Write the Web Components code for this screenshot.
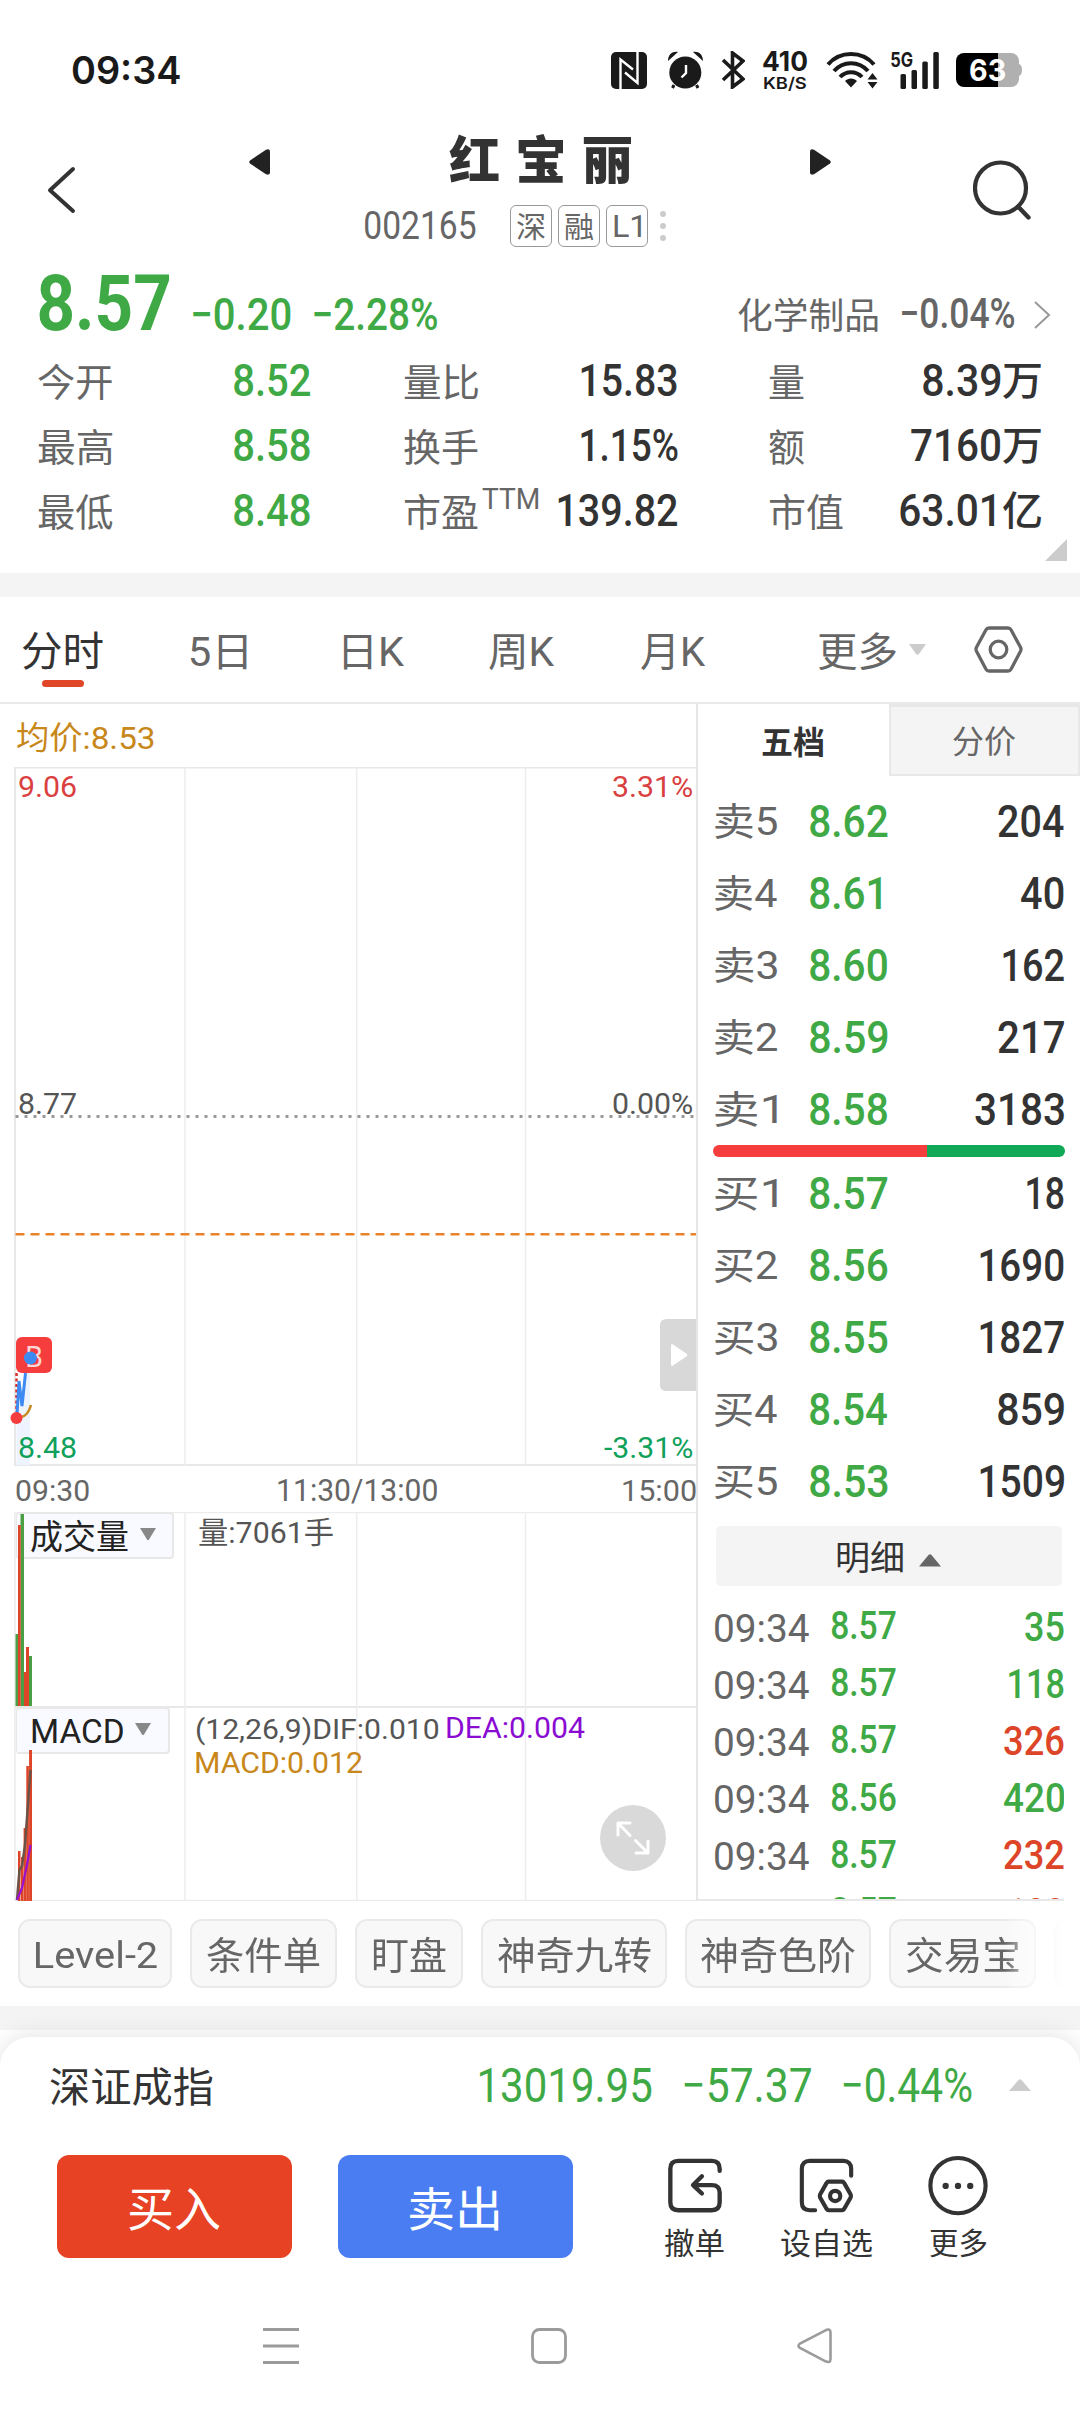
<!DOCTYPE html>
<html lang="zh-CN">
<head>
<meta charset="utf-8">
<title>红宝丽 002165</title>
<style>
  html, body { margin: 0; background: #fff; }
  body { width: 1080px; height: 2412px; overflow: hidden; font-family: Roboto, "Noto Sans CJK SC", sans-serif; color: #333; }
</style>
</head>
<body>
<stock-app></stock-app>
<script>
const ctx = document.createElement('canvas').getContext('2d');
const CJK = /[\u4e00-\u9fff]/;

/* Text set to an exact ink width (w) and, for figures, an exact ink height (h). */
class InkText extends HTMLElement {
  constructor() {
    super();
    this.attachShadow({ mode: 'open' }).innerHTML = `<style>
      :host{display:block;flex:none;overflow:visible}
      span{display:inline-block;white-space:nowrap;line-height:1;transform-origin:0 0}
      i{display:inline-block;width:0;height:0}
    </style><span><slot></slot><i></i></span>`;
  }
  connectedCallback() {
    const text = this.textContent, w = +this.getAttribute('w'), h = +this.getAttribute('h');
    const measure = () => {
      const cs = getComputedStyle(this);
      ctx.font = `${cs.fontWeight} ${cs.fontSize} ${cs.fontFamily}`;
      ctx.letterSpacing = cs.letterSpacing === 'normal' ? '0px' : cs.letterSpacing;
      return ctx.measureText(text);
    };
    if (h) {
      this.style.fontSize = '100px';
      const m0 = measure();
      this.style.fontSize = (100 * h / (m0.actualBoundingBoxAscent + m0.actualBoundingBoxDescent)) + 'px';
    } else this.style.fontSize = this.getAttribute('size') + 'px';
    const m = measure(), fs = parseFloat(getComputedStyle(this).fontSize);
    const span = this.shadowRoot.querySelector('span'), mark = this.shadowRoot.querySelector('i');
    const base = mark.getBoundingClientRect().bottom - span.getBoundingClientRect().top;
    const ink = m.actualBoundingBoxRight + m.actualBoundingBoxLeft;
    const s = w / ink;
    const up = CJK.test(text) ? fs * .88 : m.actualBoundingBoxAscent;
    const box = CJK.test(text) ? fs : m.actualBoundingBoxAscent + m.actualBoundingBoxDescent;
    this.style.width = w + 'px';
    this.style.height = box + 'px';
    this.style.lineHeight = 1;
    span.style.display = 'block';
    span.style.width = 'max-content';
    span.style.transform = `translate(${m.actualBoundingBoxLeft * s}px,${up - base}px) scaleX(${s})`;
  }
}
customElements.define('ink-text', InkText);

const num = (s, w, h, style = '') => `<ink-text w="${w}" h="${h}" style="font-weight:500;${style}">${s}</ink-text>`;
const txt = (s, w, size, style = '') => `<ink-text w="${w}" size="${size}" style="${style}">${s}</ink-text>`;
/* Lays items along a flex row; each entry is [start, width, html]. */
const line = (items, from = 0) => {
  let at = from;
  return items.map(([x, w, html]) => { const g = x - at; at = x + w; return `<div style="flex:none;width:${w}px;margin-left:${g}px">${html}</div>`; }).join('');
};
const define = (name, css, html) => customElements.define(name, class extends HTMLElement {
  constructor() { super(); this.attachShadow({ mode: 'open' }); }
  connectedCallback() {
    this.shadowRoot.innerHTML = `<style>:host{display:block}*{box-sizing:border-box}svg{display:block}.row{display:flex;align-items:center}${css}</style>${typeof html === 'function' ? html(this) : html}`;
  }
});

define('status-bar', `:host{height:120px;padding-top:20px;color:#1a1a1a}.row{height:100px}
  .net{display:flex;flex-direction:column;gap:5px;padding-top:1px}
  .bat{display:grid}.bat>*{grid-area:1/1}.bat ink-text{align-self:center;margin-left:14px}
  .sig{display:grid}.sig>*{grid-area:1/1}`,
  `<div class="row">` + line([
    [71.500, 108, num('09:34', 108, 29, 'font-family:Inter;font-weight:600;margin-top:-1px')],
    [611, 36, `<svg width="36" height="37" viewBox="0 0 36 37"><rect width="36" height="37" rx="5" fill="#1a1a1a"/><path d="M9.500 37V7.500L22 17.500M26.500 0V31L14 20.500" fill="none" stroke="#fff" stroke-width="2.400"/></svg>`],
    [667, 37, `<svg width="37" height="38" viewBox="0 0 37 38"><circle cx="18.300" cy="21.500" r="16" fill="#1a1a1a"/><path d="M7 34l-1.500 3M29.500 34l1.500 3" stroke="#1a1a1a" stroke-width="3"/><path d="M1 10C1 3 6 0 11 1L1 10zM36 10C36 3 31 0 26 1L36 10z" fill="#1a1a1a"/><path d="M19 14v8l-4.500 4.500" fill="none" stroke="#fff" stroke-width="2.400"/></svg>`],
    [721, 24, `<svg width="24" height="38" viewBox="0 0 24 38"><path d="M2 9l20 19-10.500 8V2L22 10 2 29" fill="none" stroke="#1a1a1a" stroke-width="3.600"/></svg>`],
    [763, 44, `<div class="net">${num('410', 44, 20, 'font-family:Inter;font-weight:700')}${num('KB/S', 42, 14.5, 'font-family:Inter;font-weight:600;margin-left:1px')}</div>`],
    [826, 51, `<svg width="52" height="38" viewBox="0 0 52 38"><g fill="none" stroke="#1a1a1a" stroke-width="4"><path d="M2 13.500C14-.500 36-.500 48 13.500"/><path d="M8 20C17 9.500 33 9.500 42 20"/><path d="M14 26C20 19.500 30 19.500 36 26"/></g><path d="M19 30c3-3.500 9-3.500 12 0l-6 6.500z" fill="#1a1a1a"/><path d="M46.500 22l5 6.500h-10zM46.500 37.500l5-6.500h-10z" fill="#1a1a1a"/></svg>`],
    [891, 49, `<div class="sig"><svg width="49" height="37" viewBox="0 0 49 37" fill="#1a1a1a"><rect x="9.500" y="22" width="5.500" height="15" rx="1.500"/><rect x="20.500" y="18" width="5.500" height="19" rx="1.500"/><rect x="31.300" y="9.500" width="5.500" height="27.500" rx="1.500"/><rect x="42.300" y="0" width="5.500" height="37" rx="1.500"/></svg>${num('5G', 22, 15, 'font-family:Inter;font-weight:700')}</div>`],
    [956, 66, `<div class="bat"><svg width="66" height="34" viewBox="0 0 66 34"><path d="M42 0h13a8 8 0 0 1 8 8v3q3 1 3 6t-3 6v3a8 8 0 0 1-8 8H42z" fill="#b0b0b0"/><path d="M42 0H8a8 8 0 0 0-8 8v18a8 8 0 0 0 8 8h34z" fill="#000"/></svg>${num('63', 35, 22.5, 'font-family:Inter;font-weight:700;color:#fff')}</div>`]
  ]) + `</div>`);

define('stock-tag', `:host{width:42px;height:42px;border:1.500px solid #999;border-radius:6px;display:flex;align-items:center;justify-content:center;color:#666}`, `<slot></slot>`);

define('title-bar', `:host{height:140px}.top{height:140px}.mid{width:600px;height:140px}.name{height:77px}.code{height:58px;color:#666}`,
  `<div class="row top">` + line([
    [46, 30, `<svg width="30" height="48" viewBox="0 0 30 48"><path d="M27 3L4 24.200 27 45" fill="none" stroke="#333" stroke-width="4" stroke-linecap="round" stroke-linejoin="round"/></svg>`],
    [248, 600, `<div class="mid"><div class="row name">${line([
      [249, 21, `<svg width="21" height="26" viewBox="0 0 21 26" style="margin-top:7px"><path d="M1 11.500L17 .800q4-1.500 4 2v20.400q0 3.500-4 2L1 14.500q-1.500-1.500 0-3z" fill="#222"/></svg>`],
      [449, 182, txt('红宝丽', 182, 51, 'font-weight:900;letter-spacing:15px;margin-top:1px')],
      [810, 22, `<svg width="21" height="26" viewBox="0 0 21 26" style="margin-top:7px"><path d="M20 11.500L4 .800Q0-.700 0 2.800v20.400q0 3.500 4 2L20 14.500q1.500-1.500 0-3z" fill="#222"/></svg>`]], 248)}</div>
      <div class="row code">${line([
      [365, 111, num('002165', 111, 28.5, 'font-weight:400;margin-top:-2px')],
      [510, 42, `<stock-tag>${txt('深', 28, 29)}</stock-tag>`],
      [558, 42, `<stock-tag>${txt('融', 28, 29)}</stock-tag>`],
      [606, 42, `<stock-tag>${num('L1', 27, 22, 'font-weight:400')}</stock-tag>`],
      [660, 6, `<svg width="6" height="32" fill="#ccc"><circle cx="3" cy="4" r="3"/><circle cx="3" cy="16" r="3"/><circle cx="3" cy="28" r="3"/></svg>`]], 248)}</div></div>`],
    [973, 60, `<svg width="60" height="60" viewBox="0 0 60 60"><circle cx="27.500" cy="28" r="25.500" fill="none" stroke="#333" stroke-width="4.200"/><path d="M45 46.500L55.500 57.500" stroke="#333" stroke-width="4.400" stroke-linecap="round"/></svg>`]
  ]) + `</div>`);

const G = 'color:#3fa946;', D = 'color:#333;', M = 'color:#666;';
const stat = (l1, lw1, v1, l2, lw2, x2, v2, w2, l3, lw3, v3, x3, w3, unit, sup = '') =>
  `<div class="row stat">` + line([
    [37.500, 74.500, txt(l1, 74.500, 38, M + 'margin-top:3px')],
    [234, 76, num(v1, 76, 33.5, G)],
    [403.500, lw2, txt(l2, lw2, 38, M + 'margin-top:3px')],
    ...(sup ? [[482, 57, num(sup, 57, 21, M + 'font-weight:400;margin-top:-22px')]] : []),
    [x2, w2, num(v2, w2, 33.5, D)],
    [769.500, lw3, txt(l3, lw3, 38, M + 'margin-top:3px')],
    [x3, w3, num(v3, w3, 33.5, D)],
    [1003.5, 38, txt(unit, 38, 40, D + 'font-weight:500')]]) + `</div>`;
define('quote-panel', `:host{height:313px;overflow:hidden}.price{height:73px;align-items:flex-end}.stats{padding-top:14.500px}.stat{height:65px}.corner{display:flex;justify-content:flex-end;padding-right:13px;margin-top:-4px}`,
  `<div class="row price">` + line([
    [39, 130, num('8.57', 130, 57, G + 'font-weight:700;margin-bottom:2px')],
    [193, 98, num('−0.20', 98, 33, G + 'margin-bottom:3.500px')],
    [314, 123, num('−2.28%', 123, 33, G + 'margin-bottom:3.500px')],
    [738, 140, txt('化学制品', 140, 36, M)],
    [902, 112, num('−0.04%', 112, 31, M + 'margin-bottom:5.500px')],
    [1033, 18, `<svg width="18" height="30" viewBox="0 0 18 30" style="margin-bottom:3px"><path d="M2 2l14 13L2 28" fill="none" stroke="#999" stroke-width="2"/></svg>`]
  ]) + `</div><div class="stats">`
  + stat('今开', 74, '8.52', '量比', 74, 580.6, '15.83', 96, '量', 35, '8.39', 923, 78, '万')
  + stat('最高', 74, '8.58', '换手', 74, 580.6, '1.15%', 97, '额', 35, '7160', 911, 89.5, '万')
  + stat('最低', 74, '8.48', '市盈', 74, 557.6, '139.82', 119, '市值', 74, '63.01', 900.5, 94, '亿', 'TTM')
  + `</div><div class="corner"><svg width="22" height="22"><path d="M22 0v22H0z" fill="#ccc"/></svg></div>`);

define('period-tabs', `:host{height:107px;border-bottom:2px solid #e9e9e9;color:#666;box-sizing:border-box}.row{height:105px}.on{position:relative;color:#333}.on::after{content:"";position:absolute;left:20px;top:50px;width:42px;height:6.500px;border-radius:4px;background:#e04628}ink-text{margin-top:2px}`,
  `<div class="row">` + line([
    [22, 81, `<div class="on">${txt('分时', 81, 41)}</div>`],
    [191, 56, txt('5日', 56, 40)], [344, 61, txt('日K', 61, 40)], [489, 66, txt('周K', 66, 40)], [640.500, 65, txt('月K', 65, 40)],
    [818, 78, txt('更多', 78, 40)],
    [909, 17, `<svg width="17" height="11"><path d="M0 0h17L10 10q-1.500 1.500-3 0z" fill="#ccc"/></svg>`],
    [974, 49, `<svg width="49" height="48" viewBox="0 0 49 48"><path d="M15 2h19q2 0 3 1.800l9.500 17.500q1 2 0 4L37 43.200q-1 1.800-3 1.800H15q-2 0-3-1.800L2.500 25.300q-1-2 0-4L12 3.800Q13 2 15 2z" fill="none" stroke="#666" stroke-width="3.300"/><circle cx="24.500" cy="23.500" r="8.300" fill="none" stroke="#666" stroke-width="3.300"/></svg>`]
  ]) + `</div>`);

const grid = h => `<path d="M171 0V${h}M342.700 0V${h}M511.500 0V${h}" stroke="#ededed" stroke-width="1.500"/>`;
define('indicator-button', `:host{display:flex;align-items:center;gap:12px;height:47px;border:2px solid #e8e8e8;border-left-width:1px;border-radius:4px;background:#f9faff;padding-left:14px;color:#222}svg{fill:#888}`,
  `<slot></slot><svg width="16" height="13" style="margin-top:-2px"><path d="M0 0h16l-7 11.500q-1 1-2 0z"/></svg>`);

define('time-chart', `:host{width:696px;flex:none}.avg{height:63px;padding:2px 0 0 16.500px;color:#c8871a}
  .panel{display:grid;margin-left:14px;width:682px}.panel>*{grid-area:1/1}
  .plot{height:699px}.axis{height:46px;display:flex;align-items:center;justify-content:space-between;color:#666;padding:2px 0 0 16px;border:0}
  .labels{display:grid;grid-template-columns:1fr auto;align-content:space-between;height:699px;padding:9px 4px 8px 5px;z-index:1}
  .labels>:nth-child(even){justify-self:end}
  .vol{height:194px}.macd{height:195px}.info{padding-left:182px;display:flex;flex-direction:column;z-index:1}
  .toggle{align-self:start;justify-self:end;margin-top:552px;z-index:2}
  .expand{align-self:start;justify-self:end;margin:99px 30px 0 0;z-index:2}
  indicator-button{justify-self:start;margin:0 0 0 2px;align-self:start}.marks{z-index:2}.b{justify-self:start;align-self:start;margin:569.500px 0 0 2px;width:36px;height:36px;border-radius:6px;background:#f53d3d;display:flex;justify-content:center;align-items:center;color:#ffd5d5}`,
  `<div class="row avg">${txt('均价:8.53', 136.5, 32)}</div>
  <div class="panel plot">
    <svg width="682" height="699"><path d="M0 .500H682M0 698H682M1 0V699" stroke="#e8e8e8" stroke-width="2" fill="none"/>${grid(699)}
      <path d="M1.500 349.500H682" stroke="#999" stroke-width="3" stroke-dasharray="3 6"/><path d="M1.500 467.300H682" stroke="#e8832b" stroke-width="2.600" stroke-dasharray="9 6"/>
      <path d="M2.500 650L5 614 8 640 11.500 607 16 591V698H2.500z" fill="#edf4ff"/></svg>
    <div class="labels">${num('9.06', 57, 22.5, 'font-weight:400;color:#d9403f')}${num('3.31%', 79, 22.5, 'font-weight:400;color:#d9403f')}
      ${num('8.77', 57, 22.5, 'font-weight:400;color:#555;margin-top:-24px')}${num('0.00%', 79, 22.5, 'font-weight:400;color:#555;margin-top:-24px')}
      ${num('8.48', 57, 22.5, 'font-weight:400;color:#0fa05a')}${num('-3.31%', 88, 22.5, 'font-weight:400;color:#0fa05a')}</div>
    <div class="b">${num('B', 15, 21.5, 'font-weight:400;margin-top:3px')}</div>
    <svg class="marks" width="60" height="699" style="overflow:visible"><path d="M2.500 606V645" stroke="#d9302b" stroke-width="2.500" stroke-dasharray="3 2.500"/><path d="M3 648L5 614 8 639 11.500 606 " fill="none" stroke="#3d8bf2" stroke-width="3"/><path d="M7 650q7-1 10-12" fill="none" stroke="#c8871a" stroke-width="2.500"/><circle cx="16.400" cy="591" r="6.500" fill="#3d8bf2"/><circle cx="2.500" cy="651" r="6" fill="#f53d3d"/></svg>
    <svg class="toggle" width="36" height="72"><path d="M36 0H7Q0 0 0 6v60q0 6 7 6h29z" fill="#d8d8d8"/><path d="M11 27q0-3 2-1.500l14 9.500q1 1 0 2L13 46.500q-2 1.500-2-1.500z" fill="#fff"/></svg>
  </div>
  <div class="axis">${num('09:30', 73, 22.5, 'font-weight:400')}${num('11:30/13:00', 159, 24.5, 'font-weight:400;margin:2px 0 0 2px')}${num('15:00', 73, 22.5, 'font-weight:400')}</div>
  <div class="panel vol">
    <svg width="682" height="194"><path d="M0 .500H682M1 0V194" stroke="#ececec" stroke-width="1.500" fill="none"/>${grid(194)}</svg>
    <indicator-button style="width:158px">${txt('成交量', 97, 34)}</indicator-button>
    <svg class="marks" width="30" height="194"><g fill="#4a9f45"><path d="M1.500 122h3v72h-3zM6.500 2h3.500v192H6.500zM15 144h3v50h-3z"/></g><g fill="#de4528"><path d="M4 13h2.700v181H4zM10 160h2.500v34H10zM12 135h3v59h-3z"/></g></svg>
    <div class="info">${txt('量:7061手', 134, 30, 'color:#555;margin:5px 0 0 3px')}</div>
  </div>
  <div class="panel macd">
    <svg width="682" height="195"><path d="M0 1H682" stroke="#e8e8e8" stroke-width="2"/><path d="M0 194.500H682M1 0V195" stroke="#ececec" stroke-width="1.500" fill="none"/>${grid(195)}</svg>
    <indicator-button style="width:154px;margin-top:1px">${num('MACD', 91, 24, 'font-weight:400;margin-left:1px')}</indicator-button>
    <svg class="marks" width="30" height="195"><g fill="#de4528"><path d="M4 145h2.500v50H4zM7 151h2.300v44H7zM9.600 122h2.500v73H9.600zM12.300 60h2.600v135h-2.600zM15.100 44h2.900v151h-2.900z"/></g><path d="M3 194L5.500 164 8 160 11 139 16.500 64" fill="none" stroke="#6b5348" stroke-width="2.500"/><path d="M3 194L8 182 13 159 16.500 139" fill="none" stroke="#9a12d0" stroke-width="2.300"/></svg>
    <div class="info"><div style="display:flex;gap:9px;align-items:flex-start;margin-top:10px;height:29px">${num('(12,26,9)DIF:0.010', 242, 29, 'font-weight:400;color:#555')}${num('DEA:0.004', 138, 22.5, 'font-weight:400;color:#8a0bd2;margin-top:1px')}</div>${num('MACD:0.012', 166, 22.5, 'font-weight:400;color:#c8871a;margin-top:7px')}</div>
    <svg class="expand" width="66" height="66" viewBox="0 0 66 66"><circle cx="33" cy="33" r="33" fill="#d9d9d9"/><path d="M18 30V18H30M18.500 18.500L30 30.500M48 36V48H36M47.500 47.500L35.500 35.500" fill="none" stroke="#fff" stroke-width="3" stroke-linecap="round" stroke-linejoin="round"/></svg>
  </div>`);

define('level-row', `:host{height:72px}.row{height:72px}`, e => {
  const [n, p, q, w, pw] = e.getAttribute('data').split(',');
  return `<div class="row">${line([[16.500, 62, txt(n, 62, 38, M)], [112, +pw || 77.500, num(p, +pw || 77.500, 33, G)], [365.500 - w, +w, num(q, w, 33, D)]])}</div>`;
});
define('tick-row', `:host{height:57.200px}.row{height:57.200px}`, e => {
  const [p, q, w, c] = e.getAttribute('data').split(',');
  return `<div class="row">${line([[17, 94, num('09:34', 94, 28.5, M + 'font-weight:400;margin-top:1px')], [133, 65, num(p, 65, 28.5, G + 'margin-top:-4px')], [365.500 - w, +w, num(q, w, 30, 'margin-top:-2px;color:' + (c === 'r' ? '#dd4528' : '#3fa946'))]])}</div>`;
});
define('order-book', `:host{width:384px;height:1197px;flex:none;border-left:2px solid #e6e6e6;display:flex;flex-direction:column;box-sizing:border-box}
  .tabs{display:flex;height:72px;flex:none}.tabs div{display:flex;align-items:center;justify-content:center}.a{width:191px}.z{width:191px;border:2px solid #e8e8e8;border-top-width:3px;background:#f4f4f4;color:#666}
  .asks{padding-top:9px}.ratio{display:flex;flex:none;height:12px;margin:0 15px;border-radius:6px;overflow:hidden}.ratio i:first-child{flex:none;width:214px;background:#f53d3d}.ratio i{flex:1;background:#0fa958}
  .detail{height:60px;flex:none;margin:9px 18px 12.500px;background:#f4f4f4;border-radius:5px;display:flex;align-items:center;justify-content:center;gap:16px;color:#333}
  .ticks{flex:1;min-height:0;overflow:hidden;margin-right:16px;border-bottom:2.500px solid #e8e8e8}`,
  `<div class="tabs"><div class="a">${txt('五档', 62, 32, 'font-weight:700;margin:3px 2px 0 0')}</div><div class="z">${txt('分价', 63, 32)}</div></div>
  <div class="asks">${['卖5,8.62,204,66', '卖4,8.61,40,43,71', '卖3,8.60,162,61', '卖2,8.59,217,66', '卖1,8.58,3183,89'].map(d => `<level-row data="${d}"></level-row>`).join('')}</div>
  <div class="ratio"><i></i><i></i></div>
  <div>${['买1,8.57,18,37', '买2,8.56,1690,84', '买3,8.55,1827,84', '买4,8.54,859,66', '买5,8.53,1509,84'].map(d => `<level-row data="${d}"></level-row>`).join('')}</div>
  <div class="detail">${txt('明细', 66, 34, 'margin-top:2px')}<svg width="22" height="13" style="margin-top:8px"><path d="M0 12.500L9.500 1q1.500-1.500 3 0L22 12.500z" fill="#666"/></svg></div>
  <div class="ticks">${['8.57,35,39', '8.57,118,55', '8.57,326,60,r', '8.56,420,60', '8.57,232,60,r', '8.57,188,55,r'].map(d => `<tick-row data="${d}"></tick-row>`).join('')}</div>`);

define('tool-chip', `:host{height:69px;flex:none;border:2px solid #eaeaea;border-radius:12px;background:#f8f8f8;display:flex;align-items:center;justify-content:center;color:#666;box-sizing:border-box}`, `<slot></slot>`);
define('tool-strip', `:host{height:105px}.row{height:105px;gap:18px;padding-left:18px;width:1068px;overflow:hidden;-webkit-mask:linear-gradient(90deg,#000 1004px,rgba(0,0,0,.600) 1020px,transparent 1068px)}`,
  `<div class="row"><tool-chip style="width:154px">${num('Level-2', 121, 29, 'font-weight:400;margin-left:3px')}</tool-chip>` +
  [['条件单', 147, 113], ['盯盘', 108, 73], ['神奇九转', 186, 153], ['神奇色阶', 186, 154], ['交易宝', 147, 113]].map(([s, w, t]) => `<tool-chip style="width:${w}px">${txt(s, t, 38, 'margin-top:2px')}</tool-chip>`).join('') +
  `<tool-chip style="width:60px"></tool-chip></div>`);

define('trade-sheet', `:host{height:243px;background:#fff;border-radius:30px 30px 0 0;box-shadow:0 -2px 22px rgba(0,0,0,.110);margin-top:31px;position:relative}.idx{height:96px}
  .act{display:flex;margin-top:22px;height:103px}.btn{height:103px;border-radius:12px;color:#fff;display:flex;align-items:center;justify-content:center}
  .ic{height:103px;display:flex;flex-direction:column;align-items:center;color:#333}.ic svg{height:73px;flex:none}`,
  `<div class="row idx">` + line([
    [50, 163, txt('深证成指', 163, 41, D + 'margin-top:2px')],
    [480, 172, num('13019.95', 172, 35.500, G + 'font-weight:400;margin-top:-1px')],
    [684, 127, num('−57.37', 127, 35.500, G + 'font-weight:400;margin-top:-1px')],
    [843, 129, num('−0.44%', 129, 35.500, G + 'font-weight:400;margin-top:-1px')],
    [1009, 22, `<svg width="22" height="12"><path d="M0 12L9.500 1q1.500-1.500 3 0L22 12z" fill="#ccc"/></svg>`]]) + `</div>
  <div class="act">` + line([
    [57, 235, `<div class="btn" style="background:#e84225">${txt('买入', 91, 47, 'margin-top:3px')}</div>`],
    [338, 235, `<div class="btn" style="background:#4a7df2">${txt('卖出', 89, 47, 'margin:3px 3px 0 0')}</div>`],
    [664.500, 60, `<div class="ic"><svg width="60" viewBox="0 0 60 74" fill="none" stroke="#333" stroke-width="4.400" stroke-linecap="round" stroke-linejoin="round"><path d="M55 16V14Q55 6 47 6H13Q5 6 5 14V48Q5 56 13 56H47Q55 56 55 48V38Q55 30.500 47 30.500H29M37 21.500L28 30.500 37 39"/></svg>${txt('撤单', 59, 30, '')}</div>`],
    [780.500, 91, `<div class="ic"><svg width="60" viewBox="0 0 60 74" fill="none" stroke="#333" stroke-width="4.200" stroke-linecap="round" stroke-linejoin="round"><path d="M57 21V14Q57 6 49 6H15Q7 6 7 14V48Q7 56 15 56H20.500" transform="translate(-1.500)"/><path d="M34 27H48Q49 27 50 28.500L56.500 40Q57 41.500 56.500 43L50 54.500Q49 56 48 56H34Q33 56 32 54.500L25.500 43Q25 41.500 25.500 40L32 28.500Q33 27 34 27z" transform="translate(-1.500)"/><circle cx="39.300" cy="41.500" r="5.200"/></svg>${txt('设自选', 91, 30, '')}</div>`],
    [928, 60, `<div class="ic"><svg width="60" viewBox="0 0 60 74"><circle cx="30" cy="31" r="28" fill="none" stroke="#333" stroke-width="4.200"/><g fill="#333"><circle cx="17.500" cy="31.300" r="3.200"/><circle cx="30" cy="31.300" r="3.200"/><circle cx="42.400" cy="31.300" r="3.200"/></g></svg>${txt('更多', 57, 30, '')}</div>`]
  ]) + `</div>`);

define('nav-bar', `:host{height:132px;background:#fff;position:relative}.row{height:132px}`,
  `<div class="row">` + line([
    [263, 36, `<svg width="36" height="36"><path d="M0 1.500H36M0 18H36M0 34.500H36" stroke="#9b9b9b" stroke-width="2.800"/></svg>`],
    [531, 36, `<svg width="36" height="36"><rect x="1.500" y="1.500" width="33" height="33" rx="7" fill="none" stroke="#9b9b9b" stroke-width="2.800"/></svg>`],
    [797, 36, `<svg width="36" height="36"><path d="M28.500 2.300Q33.500 0 33.500 4.500V31Q33.500 35.500 28.500 33.300L3 20Q0 18 3 15.500z" fill="none" stroke="#9b9b9b" stroke-width="2.600"/></svg>`]
  ]) + `</div>`);

define('stock-app', `:host{width:1080px}.band{height:24px;background:#f4f4f4}.main{display:flex;height:1197px}.foot{display:flow-root;overflow:clip;background:linear-gradient(#f4f4f4 24px,#fff 24px)}`,
  `<status-bar></status-bar><title-bar></title-bar><quote-panel></quote-panel><div class="band"></div><period-tabs></period-tabs>
  <div class="main"><time-chart></time-chart><order-book></order-book></div><tool-strip></tool-strip>
  <div class="foot"><trade-sheet></trade-sheet></div><nav-bar></nav-bar>`);
</script>
</body>
</html>
